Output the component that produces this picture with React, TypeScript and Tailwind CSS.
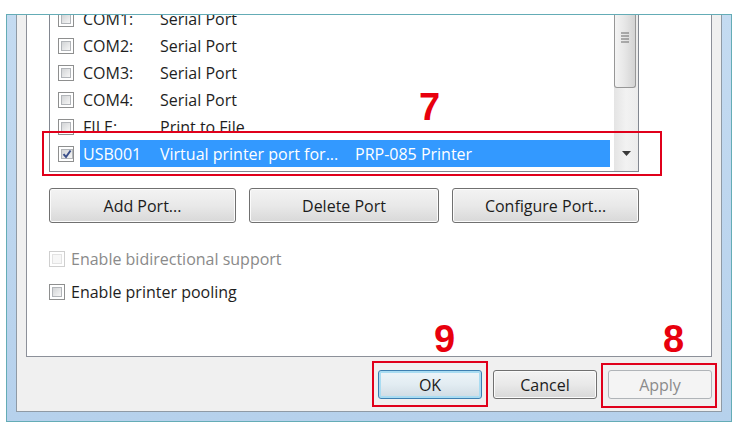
import React from "react";

const rows = [
  { port: "COM1:", desc: "Serial Port", printer: "", checked: false },
  { port: "COM2:", desc: "Serial Port", printer: "", checked: false },
  { port: "COM3:", desc: "Serial Port", printer: "", checked: false },
  { port: "COM4:", desc: "Serial Port", printer: "", checked: false },
  { port: "FILE:", desc: "Print to File", printer: "", checked: false },
  { port: "USB001", desc: "Virtual printer port for...", printer: "PRP-085 Printer", checked: true },
];

function CheckBox({ checked = false, disabled = false }: { checked?: boolean; disabled?: boolean }) {
  return (
    <span
      className={`flex w-[16px] h-[16px] shrink-0 border p-[2px] bg-white ${
        disabled ? "border-[#cfcfcf]" : "border-[#8e8f8f]"
      }`}
    >
      <span
        className={`flex flex-1 items-center justify-center border ${
          disabled
            ? "border-[#e3e3e3] bg-[#f7f7f7]"
            : "border-[#b2b5b9] bg-gradient-to-br from-[#d2d4d6] to-[#f6f6f6]"
        }`}
      >
        {checked && (
          <svg width="10" height="10" viewBox="0 0 10 10">
            <path d="M1.5 5.2 L4 8 L8.6 1.5" fill="none" stroke="#3b4f8a" strokeWidth="2" />
          </svg>
        )}
      </span>
    </span>
  );
}

function Button({ label, className = "" }: { label: string; className?: string }) {
  return (
    <div
      className={`flex items-center justify-center rounded-[3px] border border-[#707070] bg-gradient-to-b from-[#f3f3f3] via-[#e9e9e9] to-[#d8d8d8] shadow-[inset_0_0_0_1px_#fbfbfb] text-[#1c1c1c] ${className}`}
    >
      {label}
    </div>
  );
}

export default function App() {
  return (
    <div className="relative w-[754px] h-[426px] bg-white pt-[14px] pl-[6px] font-['Open_Sans',sans-serif] text-[16px]">
      <div className="flex w-[726px] h-[408px] border border-[#64acb6] bg-gradient-to-b from-[#c4dbf1] to-[#b6d1ec] px-[9px] pb-[9px]">
        <div className="flex flex-col flex-1 border-x border-b border-[#8f9aa5] bg-[#f0f0f0] px-[9px]">
          {/* tab page */}
          <div className="flex flex-col h-[342px] border-x border-b border-[#8c9099] bg-white pl-[22px]">
            {/* port list, scrolled so the first row is partly hidden */}
            <div className="flex w-[590px] h-[157px] border-x border-b border-[#828790]">
              <div className="flex-1 overflow-hidden">
                <div className="mt-[-10px] pl-[8px] pr-[4px]">
                  {rows.map((r) => (
                    <div key={r.port} className="flex items-center h-[27px]">
                      <CheckBox checked={r.checked} />
                      <div
                        className={`flex items-center h-full flex-1 ml-[6px] pl-[3px] ${
                          r.checked ? "bg-[#3399ff] text-white" : "text-[#1e1e1e]"
                        }`}
                      >
                        <span className="w-[77px]">{r.port}</span>
                        <span className="w-[195px] whitespace-nowrap">{r.desc}</span>
                        <span className="whitespace-nowrap">{r.printer}</span>
                      </div>
                    </div>
                  ))}
                </div>
              </div>
              {/* scrollbar */}
              <div className="flex flex-col w-[24px] bg-gradient-to-r from-[#e4e4e4] via-[#f2f2f2] to-[#ececec]">
                <div className="flex items-center justify-center w-[22px] h-[73px] rounded-b-[3px] border border-t-0 border-[#979797] bg-gradient-to-r from-[#f4f4f4] via-[#e6e6e6] to-[#d3d3d3]">
                  <svg width="10" height="14" viewBox="0 0 10 14" className="mb-[26px]">
                    <path d="M1 2h8M1 5h8M1 8h8M1 11h8" stroke="#6b6b6b" strokeWidth="1.2" />
                  </svg>
                </div>
                <div className="flex-1" />
                <div className="flex items-center justify-center h-[32px] pb-[4px]">
                  <svg width="9" height="5" viewBox="0 0 9 5">
                    <path d="M0 0h9L4.5 5z" fill="#3a3a3a" />
                  </svg>
                </div>
              </div>
            </div>

            {/* port buttons */}
            <div className="flex justify-between w-[590px] mt-[16px]">
              <Button label="Add Port..." className="w-[187px] h-[35px]" />
              <Button label="Delete Port" className="w-[190px] h-[35px]" />
              <Button label="Configure Port..." className="w-[187px] h-[35px]" />
            </div>

            {/* options */}
            <div className="flex flex-col gap-[6px] mt-[22px]">
              <div className="flex items-center h-[27px] gap-[6px] text-[#8a8a8a]">
                <CheckBox disabled />
                <span>Enable bidirectional support</span>
              </div>
              <div className="flex items-center h-[27px] gap-[6px] text-[#1e1e1e]">
                <CheckBox />
                <span>Enable printer pooling</span>
              </div>
            </div>
          </div>

          {/* dialog buttons */}
          <div className="flex justify-end gap-[11px] mt-[13px]">
            <div className="flex items-center justify-center w-[104px] h-[29px] rounded-[3px] border border-[#3c7fb1] bg-gradient-to-b from-[#eef5f9] via-[#e2ecf2] to-[#cfdbe3] shadow-[inset_0_0_0_2px_#a9dcf2] text-[#1c1c1c]">
              OK
            </div>
            <Button label="Cancel" className="w-[104px] h-[29px]" />
            <div className="flex items-center justify-center w-[104px] h-[29px] rounded-[3px] border border-[#b0b4b8] bg-[#f4f4f4] text-[#8b8b8b]">
              Apply
            </div>
          </div>
        </div>
      </div>

      {/* annotations */}
      <div className="absolute left-[42px] top-[131px] w-[620px] h-[45px] border-2 border-[#e0001b]" />
      <div className="absolute left-[372px] top-[361px] w-[116px] h-[46px] border-2 border-[#e0001b]" />
      <div className="absolute left-[601px] top-[363px] w-[116px] h-[45px] border-2 border-[#e0001b]" />
      <span className="absolute left-[419px] top-[88px] font-['Liberation_Sans',sans-serif] font-bold text-[38px] leading-none text-[#e8000d]">
        7
      </span>
      <span className="absolute left-[434px] top-[320px] font-['Liberation_Sans',sans-serif] font-bold text-[38px] leading-none text-[#e8000d]">
        9
      </span>
      <span className="absolute left-[663px] top-[320px] font-['Liberation_Sans',sans-serif] font-bold text-[38px] leading-none text-[#e8000d]">
        8
      </span>
    </div>
  );
}
